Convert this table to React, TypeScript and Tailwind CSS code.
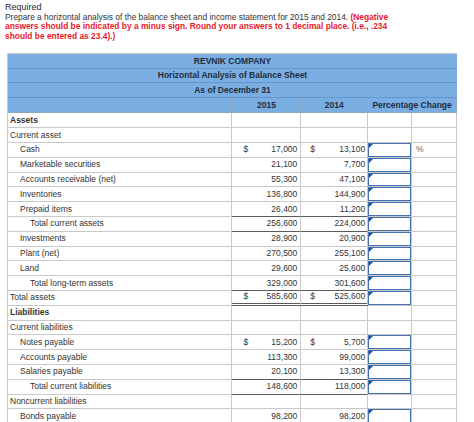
type Line = "none" | "dark" | "double";

interface RowData {
  label: string;
  pad: number;
  bold?: boolean;
  y15?: string;
  y14?: string;
  dollar?: boolean;
  pct?: boolean;
  under?: Line;
}

const rows: RowData[] = [
  { label: "Assets", pad: 2, bold: true },
  { label: "Current asset", pad: 2 },
  { label: "Cash", pad: 12, y15: "17,000", y14: "13,100", dollar: true, pct: true },
  { label: "Marketable securities", pad: 12, y15: "21,100", y14: "7,700" },
  { label: "Accounts receivable (net)", pad: 12, y15: "55,300", y14: "47,100" },
  { label: "Inventories", pad: 12, y15: "136,800", y14: "144,900" },
  { label: "Prepaid items", pad: 12, y15: "26,400", y14: "11,200", under: "dark" },
  { label: "Total current assets", pad: 22, y15: "256,600", y14: "224,000", under: "dark" },
  { label: "Investments", pad: 12, y15: "28,900", y14: "20,900" },
  { label: "Plant (net)", pad: 12, y15: "270,500", y14: "255,100" },
  { label: "Land", pad: 12, y15: "29,600", y14: "25,600" },
  { label: "Total long-term assets", pad: 22, y15: "329,000", y14: "301,600", under: "dark" },
  { label: "Total assets", pad: 2, y15: "585,600", y14: "525,600", dollar: true, under: "double" },
  { label: "Liabilities", pad: 2, bold: true },
  { label: "Current liabilities", pad: 2 },
  { label: "Notes payable", pad: 12, y15: "15,200", y14: "5,700", dollar: true },
  { label: "Accounts payable", pad: 12, y15: "113,300", y14: "99,000" },
  { label: "Salaries payable", pad: 12, y15: "20,100", y14: "13,300", under: "dark" },
  { label: "Total current liabilities", pad: 22, y15: "148,600", y14: "118,000", under: "dark" },
  { label: "Noncurrent liabilities", pad: 2 },
  { label: "Bonds payable", pad: 12, y15: "98,200", y14: "98,200" },
];

function underClass(u?: Line) {
  if (u === "dark") return "border-b border-b-[#5a5a5a]";
  if (u === "double") return "border-b-[3px] border-double border-b-[#5a5a5a]";
  return "border-b border-b-[#c9c9c9]";
}

function InputBox() {
  return (
    <div className="relative h-full w-full border border-[#4470ad] bg-white">
      <div className="absolute left-0 top-0 h-0 w-0 border-l-[2px] border-t-[2px] border-l-[#1f4f9a] border-t-[#1f4f9a] border-r-[2px] border-r-transparent border-b-[2px] border-b-transparent" />
    </div>
  );
}

function Row({ r }: { r: RowData }) {
  const hasVal = r.y15 !== undefined;
  return (
    <div className="flex h-[14.8px]">
      <div
        className={`w-[225px] flex items-center border-b border-r border-[#c9c9c9] ${r.bold ? "font-bold" : ""}`}
        style={{ paddingLeft: r.pad }}
      >
        {r.label}
      </div>
      <div className={`w-[69px] flex items-center justify-between pl-[11px] pr-[3px] border-r border-r-[#c9c9c9] ${underClass(r.under)}`}>
        <span>{r.dollar ? "$" : ""}</span>
        <span>{r.y15}</span>
      </div>
      <div className={`w-[67px] flex items-center justify-between pl-[9px] pr-[2px] border-r border-r-[#c9c9c9] ${underClass(r.under)}`}>
        <span>{r.dollar ? "$" : ""}</span>
        <span>{r.y14}</span>
      </div>
      <div className="w-[44px] border-b border-r border-[#c9c9c9]">
        {hasVal && <InputBox />}
      </div>
      <div className="w-[45px] flex items-center pl-[4px] border-b border-r border-[#c9c9c9] text-[#666]">
        {r.pct ? "%" : ""}
      </div>
    </div>
  );
}

export default function App() {
  return (
    <div className="w-[474px] h-[422px] overflow-hidden bg-white text-[#333] font-['Liberation_Sans',Arial,sans-serif]">
      {/* Instructions */}
      <div className="pl-[5px] pt-[3px] text-[8.4px] leading-[9.6px]">
        <div className="text-[9px] text-[#2b2b2b]">Required</div>
        <p className="whitespace-nowrap">
          Prepare a horizontal analysis of the balance sheet and income statement for 2015 and 2014.{" "}
          <span className="font-bold text-[#e8192c]">
            (Negative
            <br />
            answers should be indicated by a minus sign. Round your answers to 1 decimal place. (i.e., .234
            <br />
            should be entered as 23.4).)
          </span>
        </p>
      </div>

      {/* Table */}
      <div className="ml-[7px] mt-[12px] w-[450px] border-l border-t border-[#c9c9c9] text-[8.5px] text-[#333]">
        <div className="bg-[#7aaee3] font-bold text-[#1f2d3d]">
          <div className="h-[14.5px] flex items-center justify-center border-b border-[#6397cc]">REVNIK COMPANY</div>
          <div className="h-[14.5px] flex items-center justify-center border-b border-[#6397cc]">Horizontal Analysis of Balance Sheet</div>
          <div className="h-[14.5px] flex items-center justify-center border-b border-[#6397cc]">As of December 31</div>
          <div className="h-[15.5px] flex">
            <div className="w-[225px] border-r border-b border-[#8fa7c0]" />
            <div className="w-[69px] flex items-center justify-center border-r border-b border-[#8fa7c0]">2015</div>
            <div className="w-[67px] flex items-center justify-center border-r border-b border-[#8fa7c0]">2014</div>
            <div className="w-[89px] flex items-center justify-center border-r border-b border-[#8fa7c0]">Percentage Change</div>
          </div>
        </div>
        {rows.map((r) => (
          <Row key={r.label} r={r} />
        ))}
      </div>
    </div>
  );
}
